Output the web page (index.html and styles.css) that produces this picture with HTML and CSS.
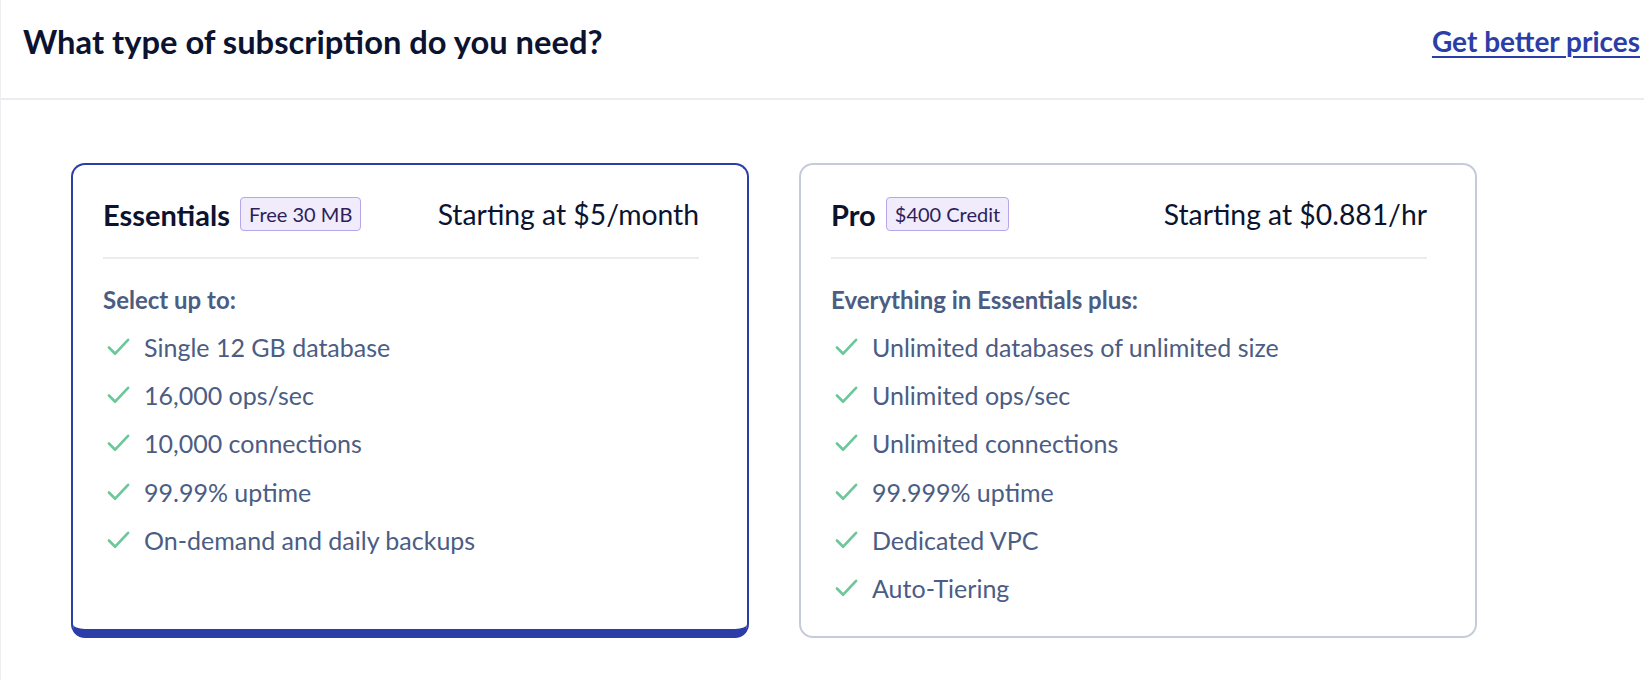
FILE: index.html
```html
<!DOCTYPE html>
<html lang="en">
<head>
<meta charset="utf-8">
<title>Subscription</title>
<link rel="stylesheet" href="styles.css">
</head>
<body>
<div class="page">
  <header class="top">
    <h1 class="title">What type of subscription do you need?</h1>
    <a class="better" href="#">Get better prices</a>
  </header>
  <main class="plans">
    <section class="card selected">
      <div class="card-head">
        <div class="name-wrap">
          <span class="name">Essentials</span>
          <span class="badge">Free 30 MB</span>
        </div>
        <span class="price">Starting at $5/month</span>
      </div>
      <div class="sub">Select up to:</div>
      <ul class="feats">
        <li><svg class="chk" viewBox="0 0 24 20"><polyline points="2,10.5 8.5,17 22,2.5"/></svg>Single 12 GB database</li>
        <li><svg class="chk" viewBox="0 0 24 20"><polyline points="2,10.5 8.5,17 22,2.5"/></svg>16,000 ops/sec</li>
        <li><svg class="chk" viewBox="0 0 24 20"><polyline points="2,10.5 8.5,17 22,2.5"/></svg>10,000 connections</li>
        <li><svg class="chk" viewBox="0 0 24 20"><polyline points="2,10.5 8.5,17 22,2.5"/></svg>99.99% uptime</li>
        <li><svg class="chk" viewBox="0 0 24 20"><polyline points="2,10.5 8.5,17 22,2.5"/></svg>On-demand and daily backups</li>
      </ul>
    </section>
    <section class="card">
      <div class="card-head">
        <div class="name-wrap">
          <span class="name">Pro</span>
          <span class="badge">$400 Credit</span>
        </div>
        <span class="price">Starting at $0.881/hr</span>
      </div>
      <div class="sub">Everything in Essentials plus:</div>
      <ul class="feats">
        <li><svg class="chk" viewBox="0 0 24 20"><polyline points="2,10.5 8.5,17 22,2.5"/></svg>Unlimited databases of unlimited size</li>
        <li><svg class="chk" viewBox="0 0 24 20"><polyline points="2,10.5 8.5,17 22,2.5"/></svg>Unlimited ops/sec</li>
        <li><svg class="chk" viewBox="0 0 24 20"><polyline points="2,10.5 8.5,17 22,2.5"/></svg>Unlimited connections</li>
        <li><svg class="chk" viewBox="0 0 24 20"><polyline points="2,10.5 8.5,17 22,2.5"/></svg>99.999% uptime</li>
        <li><svg class="chk" viewBox="0 0 24 20"><polyline points="2,10.5 8.5,17 22,2.5"/></svg>Dedicated VPC</li>
        <li><svg class="chk" viewBox="0 0 24 20"><polyline points="2,10.5 8.5,17 22,2.5"/></svg>Auto-Tiering</li>
      </ul>
    </section>
  </main>
</div>
</body>
</html>
```
FILE: styles.css
```css
* { box-sizing: border-box; }
html, body { margin: 0; padding: 0; background: #ffffff; }
body {
  font-family: "Lato", "Noto Sans", sans-serif;
  color: #0b1533;
  width: 1644px;
  height: 680px;
  overflow: hidden;
}
.page {
  border-left: 1px solid #eeeef2;
  height: 680px;
}
.top {
  height: 100px;
  border-bottom: 2px solid #ebebf0;
  display: flex;
  align-items: center;
  justify-content: space-between;
  padding: 0 4px 16px 22px;
}
.title {
  margin: 0;
  font-size: 32.7px;
  font-weight: 700;
  color: #0c1330;
}
.better {
  font-size: 28px;
  font-weight: 700;
  color: #2b3ea8;
  text-decoration: underline;
  text-underline-offset: 4px;
  text-decoration-thickness: 2px;
}
.plans {
  display: flex;
  gap: 50px;
  padding: 63px 0 0 70px;
}
.card {
  width: 678px;
  border: 2px solid #c5ccd9;
  border-radius: 14px;
  padding: 30px 48px 24px 30px;
}
.card.selected {
  border-color: #2b3ea8;
  border-bottom: 9px solid #2c3da8;
}
.card-head {
  display: flex;
  align-items: center;
  justify-content: space-between;
  padding-bottom: 24px;
  border-bottom: 2px solid #ebebf0;
  height: 64px;
}
.name-wrap {
  display: flex;
  align-items: center;
  gap: 10px;
}
.name {
  font-size: 29px;
  font-weight: 700;
  color: #0c1330;
}
.badge {
  font-size: 20px;
  color: #2e1e5c;
  background: #f0ecfb;
  border: 1.5px solid #b8a6ec;
  border-radius: 4px;
  padding: 5px 8px;
  line-height: 22px;
}
.price {
  font-size: 28.3px;
  color: #0c1330;
}
.sub {
  margin-top: 27px;
  margin-bottom: 9px;
  font-size: 24px;
  font-weight: 700;
  color: #4b5d83;
  line-height: 28px;
}
.feats {
  list-style: none;
  margin: 0;
  padding: 0;
}
.feats li {
  display: flex;
  align-items: center;
  height: 48.2px;
  font-size: 25px;
  color: #4b5d83;
  padding-left: 4px;
}
.chk {
  width: 23px;
  height: 20px;
  margin-right: 14px;
  fill: none;
  stroke: #6cc79b;
  stroke-width: 2.8;
  stroke-linecap: round;
  stroke-linejoin: round;
}
```
